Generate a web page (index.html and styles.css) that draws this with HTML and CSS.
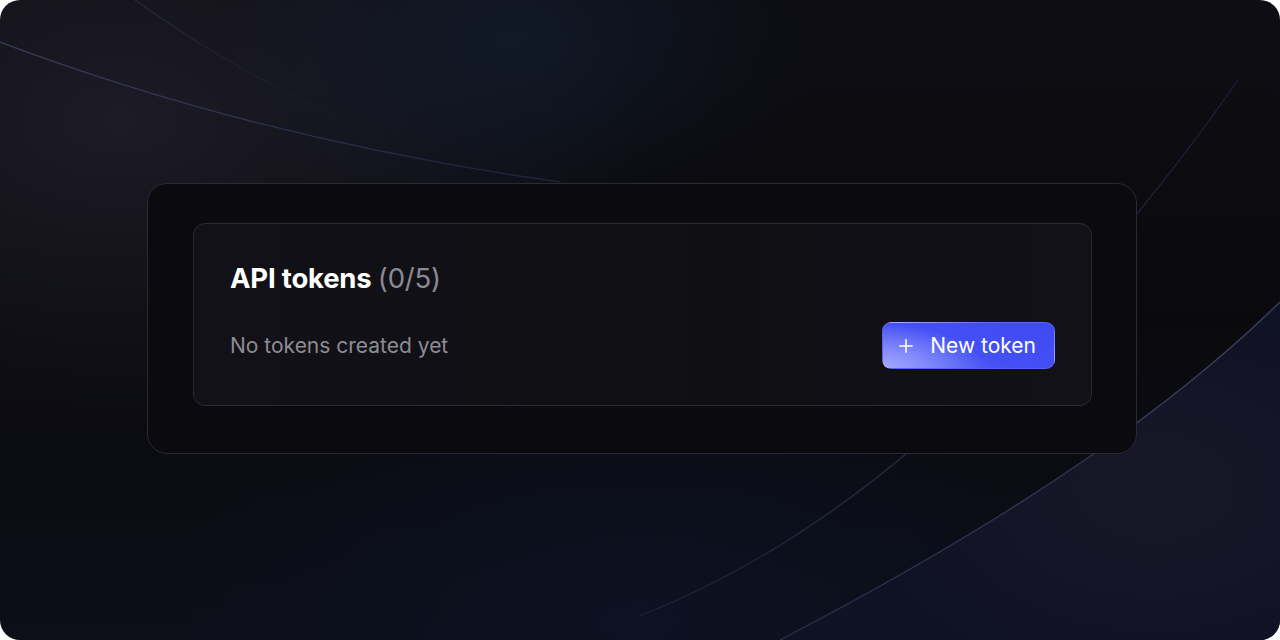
FILE: index.html
```html
<!DOCTYPE html>
<html>
<head>
<meta charset="utf-8">
<link rel="stylesheet" href="styles.css">
</head>
<body>
<div class="stage">
  <svg class="lines" width="1280" height="640" viewBox="0 0 1280 640">
    <defs>
      <linearGradient id="g1" x1="0" y1="0" x2="1" y2="0">
        <stop offset="0" stop-color="#3a3d55"/>
        <stop offset="0.6" stop-color="#2a2f4a"/>
        <stop offset="1" stop-color="#1c2238"/>
      </linearGradient>
      <linearGradient id="g2" x1="0" y1="0" x2="1" y2="1">
        <stop offset="0" stop-color="#262b44"/>
        <stop offset="1" stop-color="#151a2c" stop-opacity="0.2"/>
      </linearGradient>
      <linearGradient id="g3" x1="1" y1="0" x2="0" y2="1">
        <stop offset="0" stop-color="#1c2038"/>
        <stop offset="0.5" stop-color="#2c2f48"/>
        <stop offset="1" stop-color="#1e2236"/>
      </linearGradient>
      <linearGradient id="g4" x1="1" y1="0" x2="0" y2="1">
        <stop offset="0" stop-color="#3a3e5c"/>
        <stop offset="1" stop-color="#2a2d44"/>
      </linearGradient>
      <radialGradient id="fill4" cx="0.75" cy="0.55" r="0.6">
        <stop offset="0" stop-color="#181728"/>
        <stop offset="1" stop-color="#0f1224"/>
      </radialGradient>
    </defs>
    <path d="M1280 302 C1180 400 1030 510 780 640 L1280 640 Z" fill="url(#fill4)"/>
    <path d="M0 42 Q260 140 560 182" stroke="url(#g1)" stroke-width="1.3" fill="none"/>
    <path d="M135 0 Q260 90 405 145" stroke="url(#g2)" stroke-width="1.2" fill="none"/>
    <path d="M1238 80 Q1100 280 907 453 Q780 560 640 616" stroke="url(#g3)" stroke-width="1.2" fill="none"/>
    <path d="M1280 302 C1180 400 1030 510 780 640" stroke="url(#g4)" stroke-width="1.3" fill="none"/>
  </svg>
  <main class="frame">
    <section class="card">
      <h1 class="title">API tokens <span class="count">(0/5)</span></h1>
      <div class="row">
        <p class="empty">No tokens created yet</p>
        <button class="btn">
          <svg class="plus" width="14" height="14" viewBox="0 0 14 14"><path d="M7 0.8v12.4M0.8 7h12.4" stroke="#fff" stroke-width="1.6" stroke-linecap="round" fill="none"/></svg>
          <span>New token</span>
        </button>
      </div>
    </section>
  </main>
</div>
</body>
</html>
```
FILE: styles.css
```css
html, body {
  margin: 0;
  padding: 0;
  background: #ffffff;
}
body {
  width: 1280px;
  height: 640px;
  overflow: hidden;
  font-family: Inter, "Noto Sans", sans-serif;
}
.stage {
  position: relative;
  width: 1280px;
  height: 640px;
  border-radius: 20px;
  overflow: hidden;
  background:
    radial-gradient(ellipse 420px 260px at 520px 40px, rgba(18, 32, 52, 0.55), rgba(18, 32, 52, 0) 70%),
    radial-gradient(ellipse 700px 420px at 120px 120px, #1c1b26 0%, rgba(28, 27, 38, 0) 75%),
    radial-gradient(ellipse 600px 300px at 640px 620px, #0c1222 0%, rgba(12, 18, 34, 0) 80%),
    linear-gradient(180deg, #0d0d13 0%, #0a0a0e 50%, #0c0e18 100%);
  display: flex;
  align-items: flex-start;
}
.lines {
  position: absolute;
  left: 0;
  top: 0;
}
.frame {
  position: relative;
  box-sizing: border-box;
  margin-top: 183px;
  margin-left: 147px;
  width: 990px;
  padding: 39px 44px 47px 45px;
  background: #0b0a0f;
  border: 1px solid #2a2a31;
  border-radius: 20px;
}
.card {
  background: linear-gradient(90deg, #121117 0%, #100f14 60%, #121118 100%);
  border: 1px solid #2b2a31;
  border-radius: 12px;
  padding: 36px 36px 36px 36px;
}
.title {
  margin: 0;
  font-size: 27.5px;
  font-weight: 700;
  color: #ffffff;
  line-height: 36px;
  letter-spacing: -0.2px;
}
.count {
  font-weight: 400;
  color: #8b8a92;
}
.row {
  margin-top: 26px;
  display: flex;
  align-items: center;
  justify-content: space-between;
}
.empty {
  margin: 0;
  font-size: 21px;
  color: #8d8c94;
}
.btn {
  box-sizing: border-box;
  display: flex;
  align-items: center;
  gap: 17px;
  height: 47px;
  padding: 0 18px 0 16px;
  border: 1px solid rgba(255,255,255,0.12);
  border-radius: 9px;
  background:
    radial-gradient(ellipse 100px 44px at 0% 100%, #a3a8ff 0%, rgba(163,168,255,0) 100%),
    linear-gradient(200deg, #3f4bf2 0%, #4450f4 55%, #626cf6 100%);
  color: #ffffff;
  font-family: Inter, "Noto Sans", sans-serif;
  font-size: 21px;
}
.plus {
  display: block;
}
```
